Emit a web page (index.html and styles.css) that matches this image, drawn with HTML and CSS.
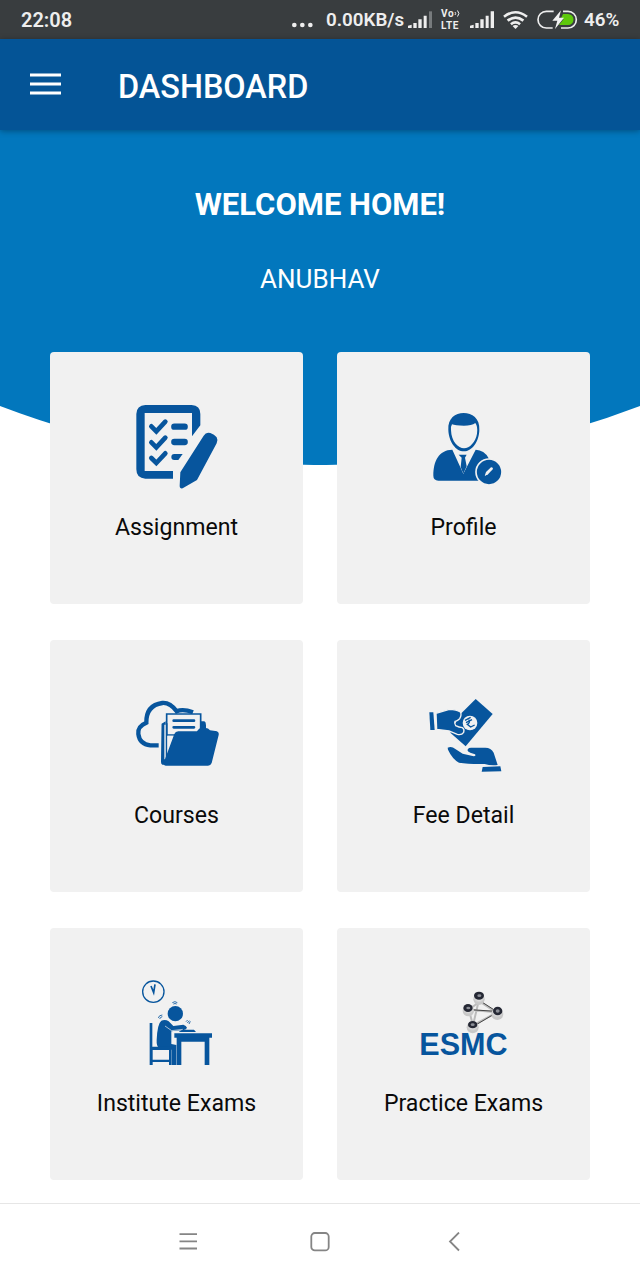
FILE: index.html
```html
<!DOCTYPE html>
<html lang="en">
<head>
<meta charset="utf-8">
<title>Dashboard</title>
<link rel="stylesheet" href="styles.css">
</head>
<body>
<div class="screen">
  <header class="status">
    <span class="time">22:08</span>
    <svg class="dots" viewBox="36 0 63 117"><g fill="#eee"><circle cx="43" cy="75" r="7"/><circle cx="67" cy="75" r="7"/><circle cx="91" cy="75" r="7"/></g></svg>
    <span class="speed">0.00KB/s</span>
    <svg class="signal" viewBox="384 0 75 117"><g fill="#eee"><path d="M384 84v-7l11-3v10zM400 69h10v15h-10zM415 58h10v26h-10zM431 47h9v37h-9z"/><path fill="#777b7d" d="M447 34h9v50h-9z"/></g></svg>
    <span class="volte"><span class="vo">Vo<svg viewBox="0 0 6 8"><path d="M1 2.5q1.4 1.5 0 3M3.5 1q2.8 3 0 6" fill="none" stroke="#eee"/></svg></span><span>LTE</span></span>
    <svg class="signal signal-full" viewBox="570 0 75 117"><path fill="#eee" d="M570 84v-7l11-3v10zM586 69h10v15h-10zM601 58h10v26h-10zM617 47h9v37h-9zM632 34h10v50h-10z"/></svg>
    <svg class="wifi" viewBox="669 0 76 117"><g fill="none" stroke="#eee" stroke-width="8"><path d="M672 50q35-27 70 0"/><path d="M683 62q24-19 48 0"/><path d="M693 73q14-11 28 0"/></g><path fill="#eee" d="M698 78q9-6 18 0l-9 9z"/></svg>
    <svg class="battery" viewBox="772 0 123 117"><path d="M822 34H800a25 25 0 0 0 0 50h19M850 34h15a25 25 0 0 1 0 50h-21" fill="none" stroke="#eee" stroke-width="5"/><path d="M850 42h15a16 16 0 0 1 0 33h-27l14-18h-9z" fill="#5ec90c"/><path d="M844 31l-26 31h15l-7 25 27-34h-15z" fill="#f2f2f2"/></svg>
    <span class="percent">46%</span>
  </header>
  <nav class="appbar">
    <svg class="menu" viewBox="0 0 31 22"><path d="M0 2h31M0 11h31M0 20h31" stroke="#fff" stroke-width="3"/></svg>
    <h1>DASHBOARD</h1>
  </nav>
  <main class="content">
    <svg class="backdrop" viewBox="0 0 640 335"><path fill="#0277bd" d="M0 0h640v276A897 897 0 0 1 0 276z"/></svg>
    <section class="welcome"><h2>WELCOME HOME!</h2><p>ANUBHAV</p></section>
    <section class="cards">
      <article class="card">
        <svg class="icon" viewBox="2 0 300 300"><path d="M57 27H196Q222 28 222 54V88L197 121V51H55V225H140V248H57Q30 247 30 220V54Q31 28 57 27Z"/><path d="M75 91l15 15 27-29M75 139l15 15 27-29M75 186l15 15 27-29" fill="none" stroke="#07559d" stroke-width="14" stroke-linecap="round"/><path d="M144 92h31M144 138h31" fill="none" stroke="#07559d" stroke-width="19" stroke-linecap="round"/><path d="M144 174h25l-13 18h-12a9 9 0 0 1 0-18z"/><path d="M232 119q7-12 20-8 12 4 19 13 5 9 0 18l-59 110-43 25q-9 2-9-8l2-40z"/></svg>
        <span class="label">Assignment</span>
      </article>
      <article class="card">
        <svg class="icon" viewBox="-25 -18 300 300"><path d="M78 83C76 49 99 33 124 33S173 49 171 83C171 116 150 148 125 148S79 118 78 83z"/><path d="M86 84Q84 76 89 67 98 71 125 71 148 71 159 63q8 10 5 32c-4 24-22 44-39 44S87 119 86 84z" fill="#f1f1f1"/><path d="M90 143l33 72 37-72q26 2 38 24l17 42-13 27H48q-15-1-15-15c0-44 16-77 57-78z"/><path d="M90 143l10 5 23 67 27-67 10-5-13 2q-22 14-44 0z" fill="#f1f1f1"/><path d="M109 158h24l-5 9 5 26-10 22-8-20 3-28z"/><circle cx="200" cy="210" r="39" stroke="#f1f1f1" stroke-width="5"/><path d="M187 222l4-12 15-14q6-1 6 5l-15 16z" fill="#f1f1f1"/></svg>
        <span class="label">Profile</span>
      </article>
      <article class="card">
        <svg class="icon" viewBox="3 -18 300 300"><path d="M98 166H73Q41 163 37 132 34 109 61 98 60 46 109 39 132 37 152 64 171 56 201 67" fill="none" stroke="#07559d" stroke-width="13"/><path d="M107 101l12-7v130H109q-4-2-4-10zM220 94h15q5 2 5 12v20h-20z"/><path d="M122 72h102v63H122z" fill="#f1f1f1" stroke="#07559d" stroke-width="5"/><path d="M143 92h61M143 112h61" stroke="#07559d" stroke-width="8" stroke-linecap="round"/><path d="M110 101v121M122 100v116M233 98v20" stroke="#07559d" stroke-width="5"/><path d="M117 104v104" stroke="#f1f1f1" stroke-width="4"/><path d="M124 137h19l-19 60z" fill="#f1f1f1"/><path d="M145 132q3-8 12-8h56q8-14 23-11 12 1 16 8l16 2q12 1 10 12l-21 84q-3 8-11 8H119q-9-1-6-9z"/></svg>
        <span class="label">Courses</span>
      </article>
      <article class="card">
        <svg class="icon" viewBox="-19 -18 300 300"><path d="M27 67h12l4 53H30z"/><path d="M120 73l46-46 51 45-81 97-46-41z"/><path d="M47 70l40-12q22 1 33 8 5 8-2 20-8 8-14 8-3 6 2 13 10 5 20 6 7 4 4 14-6 9-19 6L86 123l-37-5z" stroke="#f1f1f1" stroke-width="4"/><circle cx="149" cy="99" r="22" fill="#f1f1f1"/><path d="M134 91l17-9M137 98l18-9M145 89q6 9-4 14l10 8 12-6" fill="none" stroke="#07559d" stroke-width="4"/><path d="M82 173q12-5 23 4l22 14 33 8q8-1 4-6l-14-5q-12-4-7-11 2-4 9-4h43q17 0 25 15l12 37q-22 2-39-3-47 1-77-4-20-11-33-39zM187 231l53-2 3 15-59 1z"/></svg>
        <span class="label">Fee Detail</span>
      </article>
      <article class="card">
        <svg class="icon" viewBox="-10 6 300 300"><circle cx="69" cy="65" r="32" fill="none" stroke="#07559d" stroke-width="4"/><path d="M62 48l8 20 4-25" fill="none" stroke="#07559d" stroke-width="5"/><circle cx="135" cy="131" r="23"/><path d="M126 98q8-6 15 0M129 102q5-3 10 0M84 144q2-9 12-9M88 147q2-6 8-7M167 155l5-5m-1 9l6-7m-1 10l4-8" fill="none" stroke="#07559d" stroke-width="2.5"/><path d="M93 152q12-5 22 2l14 14 30-4q9 3 11 9-2 6-10 7l-37 4v38l15 3v60h-15v-46l-37-5q-8-5-7-24 2-49 14-58z"/><path d="M104 168l20 14 34-4" fill="none" stroke="#f1f1f1" stroke-width="2"/><path d="M58 159h8v71h56v55h-6v-9H67v9h-9zM67 240v29h49v-29zM145 185l11-6h35l6 7h-45zM132 190h113v13h-8v82h-14v-70h-70v70h-14v-82h-7z" fill-rule="evenodd"/></svg>
        <span class="label">Institute Exams</span>
      </article>
      <article class="card">
        <svg class="icon" viewBox="11 -24 300 300"><defs><radialGradient id="ball" cy=".3"><stop offset=".3" stop-color="#eee"/><stop offset="1" stop-color="#c8c8c8"/></radialGradient></defs><path d="M207 65l-31 24 82 8-53-34-17 73 70-38M176 91l12 45" fill="none" stroke="#bbb" stroke-width="6"/><path d="M207 61l51 33-80-5M191 138l66-39" fill="none" stroke="#444" stroke-width="3"/><g fill="url(#ball)"><circle cx="206" cy="58" r="17"/><circle cx="174" cy="92" r="17"/><circle cx="261" cy="102" r="18"/><circle cx="187" cy="142" r="18"/></g><g fill="#252834"><ellipse cx="206" cy="47" rx="15" ry="12"/><ellipse cx="173" cy="84" rx="14" ry="12"/><ellipse cx="262" cy="93" rx="14" ry="13"/><ellipse cx="187" cy="134" rx="14" ry="11"/></g><g fill="#8b8e96"><ellipse cx="207" cy="47" rx="6" ry="4"/><ellipse cx="174" cy="84" rx="6" ry="4"/><ellipse cx="262" cy="93" rx="6" ry="5"/><ellipse cx="187" cy="134" rx="6" ry="4"/></g><text class="brand" x="27" y="224" textLength="265" lengthAdjust="spacingAndGlyphs">ESMC</text></svg>
        <span class="label">Practice Exams</span>
      </article>
    </section>
  </main>
  <footer class="navbar">
    <svg viewBox="0 0 20 20"><path d="M1.5 2.2h17.5M1.5 9.3h17.5M1.5 16.5h17.5"/></svg>
    <svg viewBox="0 0 20 20"><rect x="1.3" y="1" width="17.4" height="17.4" rx="3.5"/></svg>
    <svg viewBox="0 0 20 20"><path d="M15 0.5L6 9.5l9 9"/></svg>
  </footer>
</div>
</body>
</html>
```
FILE: styles.css
```css
* { box-sizing: border-box; }
body { margin: 0; font-family: Roboto, sans-serif; }
h1, h2, p { margin: 0; }
svg { display: block; flex: none; }
.screen { width: 640px; height: 1280px; display: flex; flex-direction: column; background: #fff; overflow: hidden; }
.status { height: 39px; flex: none; display: flex; align-items: center; background: #393d3f; color: #eee; font-size: 18.8px; font-weight: 600; line-height: 37px; padding-left: 21px; white-space: nowrap; }
.time { width: 271px; font-size: 20px; padding-top: 2px; }
.speed, .percent { padding-top: 2px; }
.dots { width: 21px; height: 39px; margin-right: 13px; }
.speed { width: 82px; }
.signal { width: 25px; height: 39px; margin-right: 8px; }
.volte { width: 29px; font-size: 10px; font-weight: 700; line-height: 12px; letter-spacing: .6px; display: flex; flex-direction: column; }
.vo { display: flex; }
.vo svg { width: 6px; height: 9px; margin-top: 1px; }
.wifi { width: 25px; height: 39px; margin-right: 9px; }
.battery { width: 41px; height: 39px; margin-right: 6px; }
.appbar { height: 91px; flex: none; display: flex; align-items: center; padding-left: 30px; background: #045496; color: #fff; position: relative; z-index: 2; box-shadow: 0 1px 6px rgba(0,0,0,.35); }
.menu { width: 31px; height: 22px; margin: 0 57px 2px 0; }
h1 { font-size: 32.4px; font-weight: 500; line-height: 40px; padding-top: 4px; }
.content { flex: 1; position: relative; min-height: 0; }
.backdrop { position: absolute; top: 0; left: 0; width: 640px; height: 335px; }
.welcome { position: relative; height: 222px; padding-top: 55px; text-align: center; color: #fff; }
h2 { font-size: 31px; font-weight: 700; line-height: 40px; }
.welcome p { font-size: 26px; line-height: 32px; margin-top: 38px; }
.cards { position: relative; display: grid; grid-template-columns: 253px 253px; grid-auto-rows: 252px; gap: 36px 34px; padding-left: 50px; }
.card { background: #f1f1f1; border-radius: 4px; padding-top: 44px; display: flex; flex-direction: column; align-items: center; }
.icon { width: 100px; height: 100px; fill: #07559d; }
.label { font-size: 23.1px; line-height: 30px; margin-top: 17px; color: #0a0a0a; }
.brand { font: bold 96px "Liberation Sans", Arial, sans-serif; fill: #07559d; }
.navbar { height: 77px; flex: none; border-top: 1px solid #e6e6e6; display: flex; justify-content: center; align-items: center; gap: 112px; background: #fff; }
.navbar svg { width: 20px; height: 20px; fill: none; stroke: #858585; stroke-width: 1.8; }
.navbar svg:last-child { margin-left: 2px; margin-right: -2px; }
```
